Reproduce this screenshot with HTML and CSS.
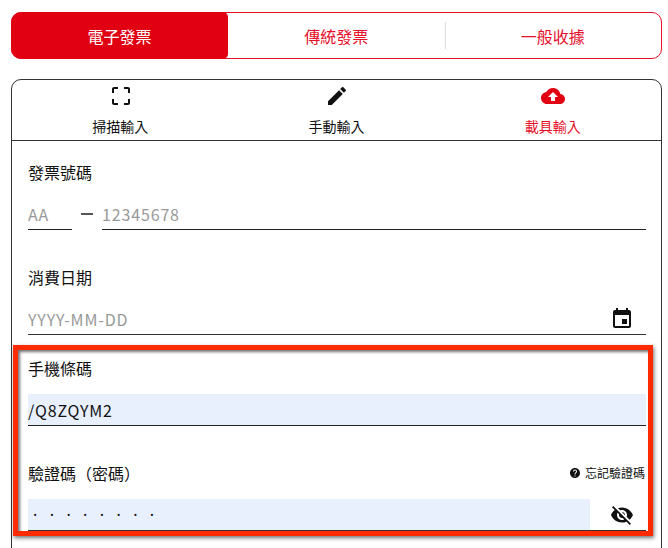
FILE: index.html
```html
<!DOCTYPE html>
<html>
  <head>
    <title>發票輸入</title>
    <link rel="stylesheet" href="styles.css">
  </head>
  <body>
    <div class="page">
      <div class="kind-tabs">
        <div class="kind-tab kind-tab-active">電子發票</div>
        <div class="kind-tab">傳統發票</div>
        <div class="kind-tab kind-tab-last">一般收據</div>
      </div>

      <div class="card">
        <div class="mode-tabs">
          <div class="mode-tab">
            <svg class="icon" viewBox="0 0 24 24"><path d="M3 5v4h2V5h4V3H5c-1.1 0-2 .9-2 2zm2 10H3v4c0 1.1.9 2 2 2h4v-2H5v-4zm14 4h-4v2h4c1.1 0 2-.9 2-2v-4h-2v4zm0-16h-4v2h4v4h2V5c0-1.1-.9-2-2-2z"/></svg>
            <span>掃描輸入</span>
          </div>
          <div class="mode-tab">
            <svg class="icon" viewBox="0 0 24 24"><path d="M3 17.25V21h3.75L17.81 9.94l-3.75-3.75L3 17.25zM20.71 7.04c.39-.39.39-1.02 0-1.41l-2.34-2.34c-.39-.39-1.02-.39-1.41 0l-1.83 1.83 3.75 3.75 1.83-1.83z"/></svg>
            <span>手動輸入</span>
          </div>
          <div class="mode-tab mode-tab-active">
            <svg class="icon" viewBox="0 0 24 24"><path d="M19.35 10.04C18.67 6.59 15.64 4 12 4 9.11 4 6.6 5.64 5.35 8.04 2.34 8.36 0 10.91 0 14c0 3.31 2.69 6 6 6h13c2.76 0 5-2.24 5-5 0-2.64-2.05-4.78-4.65-4.96zM14 13v4h-4v-4H7l5-5 5 5h-3z"/></svg>
            <span>載具輸入</span>
          </div>
        </div>

        <form class="fields">
          <div class="field">
            <div class="field-label">發票號碼</div>
            <div class="field-row">
              <input class="input input-track" placeholder="AA">
              <span class="dash"></span>
              <input class="input" placeholder="12345678">
            </div>
          </div>

          <div class="field field-tight">
            <div class="field-label">消費日期</div>
            <div class="field-row field-line">
              <input class="input input-bare" placeholder="YYYY-MM-DD">
              <svg class="icon field-icon" viewBox="0 0 24 24"><path d="M17 12h-5v5h5v-5zM16 1v2H8V1H6v2H5c-1.11 0-1.99.9-1.99 2L3 19c0 1.1.89 2 2 2h14c1.1 0 2-.9 2-2V5c0-1.1-.9-2-2-2h-1V1h-2zm3 18H5V8h14v11z"/></svg>
            </div>
          </div>

          <div class="field">
            <div class="field-label">手機條碼</div>
            <div class="field-row">
              <input class="input input-filled" value="/Q8ZQYM2">
            </div>
          </div>

          <div class="field">
            <div class="field-label field-label-split">
              <span>驗證碼（密碼）</span>
              <span class="forgot">
                <svg class="icon-small" viewBox="0 0 24 24"><path d="M12 2C6.48 2 2 6.48 2 12s4.48 10 10 10 10-4.48 10-10S17.52 2 12 2zm1 17h-2v-2h2v2zm2.07-7.75l-.9.92C13.45 12.9 13 13.5 13 15h-2v-.5c0-1.1.45-2.1 1.17-2.83l1.24-1.26c.37-.36.59-.86.59-1.41 0-1.1-.9-2-2-2s-2 .9-2 2H8c0-2.21 1.79-4 4-4s4 1.79 4 4c0 .88-.36 1.68-.93 2.25z"/></svg>
                忘記驗證碼
              </span>
            </div>
            <div class="field-row field-line">
              <input class="input input-bare input-filled input-secret" value="········">
              <svg class="icon eye-icon" viewBox="0 0 24 24"><path d="M12 7c2.76 0 5 2.24 5 5 0 .65-.13 1.26-.36 1.83l2.92 2.92c1.51-1.26 2.7-2.89 3.43-4.75-1.73-4.39-6-7.5-11-7.5-1.4 0-2.74.25-3.98.7l2.16 2.16C10.74 7.13 11.35 7 12 7zM2 4.27l2.28 2.28.46.46C3.08 8.3 1.78 10.02 1 12c1.73 4.39 6 7.5 11 7.5 1.55 0 3.03-.3 4.38-.84l.42.42L19.73 22 21 20.73 3.27 3 2 4.27zM7.53 9.8l1.55 1.55c-.05.21-.08.43-.08.65 0 1.66 1.34 3 3 3 .22 0 .44-.03.65-.08l1.55 1.55c-.67.33-1.41.53-2.2.53-2.76 0-5-2.24-5-5 0-.79.2-1.53.53-2.2zm4.31-.78l3.15 3.15.02-.16c0-1.66-1.34-3-3-3l-.17.01z"/></svg>
            </div>
          </div>
        </form>

        <div class="highlight"></div>
      </div>
    </div>
  </body>
</html>
```

FILE: styles.css
```css
html, body {
  margin: 0;
  height: 100%;
  overflow: hidden;
  background: #fff;
}
body, input {
  font-family: "Noto Sans CJK TC", "Noto Sans", sans-serif;
  color: #111;
}
.page {
  padding: 12px 6px 0 11px;
}

/* top tabs */
.kind-tabs {
  display: grid;
  grid-template-columns: 216px 1fr 1fr;
  height: 47px;
  box-sizing: border-box;
  border: 1px solid #e60f2a;
  border-radius: 10px;
  color: #e60f2a;
  font-size: 16px;
}
.kind-tab {
  display: flex;
  align-items: center;
  justify-content: center;
  margin: -1px 0;
  position: relative;
}
.kind-tab-active {
  margin-left: -1px;
  background: #e00012;
  border-radius: 10px 5px 5px 10px;
  color: #fff;
}
.kind-tab-last:before {
  content: "";
  position: absolute;
  left: 0;
  top: 10px;
  bottom: 10px;
  border-left: 1px solid #ddd;
}

/* card with mode tabs */
.card {
  position: relative;
  margin-top: 20px;
  height: 480px;
  box-sizing: border-box;
  border: 1px solid #333;
  border-radius: 10px 10px 0 0;
}
.mode-tabs {
  display: grid;
  grid-template-columns: repeat(3, 1fr);
  height: 60px;
  border-bottom: 1px solid #333;
}
.mode-tab {
  display: flex;
  flex-direction: column;
  align-items: center;
  padding-top: 4px;
  font-size: 14px;
  line-height: 20px;
}
.mode-tab span {
  margin-top: 8px;
}
.mode-tab .icon {
  margin-left: 1px;
}
.mode-tab-active {
  color: #e60f2a;
}
.mode-tab-active .icon {
  fill: #e00012;
}
.icon {
  display: block;
  width: 24px;
  height: 24px;
  fill: #111;
  flex: none;
}
.icon-small {
  width: 12px;
  height: 12px;
  fill: #111;
  margin-right: 4px;
}

/* form */
.fields {
  padding: 19px 15px 0 16px;
}
.field {
  margin-bottom: 35px;
}
.field-tight {
  margin-bottom: 21px;
}
.field-label {
  font-size: 16px;
  line-height: 24px;
  margin-bottom: 14px;
}
.field-label-split {
  display: flex;
  justify-content: space-between;
  align-items: center;
}
.forgot {
  display: flex;
  align-items: center;
  padding-right: 1px;
  font-size: 12px;
}
.field-row {
  display: flex;
  align-items: center;
}
.field-line {
  border-bottom: 1px solid #333;
}
.input {
  flex: 1;
  min-width: 0;
  height: 32px;
  box-sizing: border-box;
  padding: 0;
  border: 0;
  border-bottom: 1px solid #222;
  border-radius: 0;
  outline: none;
  background: transparent;
  font-size: 16px;
  letter-spacing: 0.85px;
}
.input::placeholder {
  color: #999;
}
.input-track {
  flex: none;
  width: 44px;
}
.dash {
  width: 12px;
  margin: 0 9px;
  border-top: 2px solid #555;
}
.input-bare {
  height: 31px;
  border-bottom: 0;
}
.input-filled {
  background: #e8f0fe;
}
.input-secret {
  padding-left: 5px;
  font-family: "Noto Sans", sans-serif;
  letter-spacing: 12.4px;
}
.field-icon {
  margin-right: 12px;
}
.eye-icon {
  margin: 0 12px 0 20px;
}

/* annotation frame */
.highlight {
  position: absolute;
  left: 1px;
  top: 265px;
  width: 640px;
  height: 191px;
  box-sizing: border-box;
  border: 5px solid #ff2a00;
  box-shadow: 1px 2px 4px rgba(0, 0, 0, 0.55), inset 2px 2px 3px rgba(0, 0, 0, 0.55);
}
```
